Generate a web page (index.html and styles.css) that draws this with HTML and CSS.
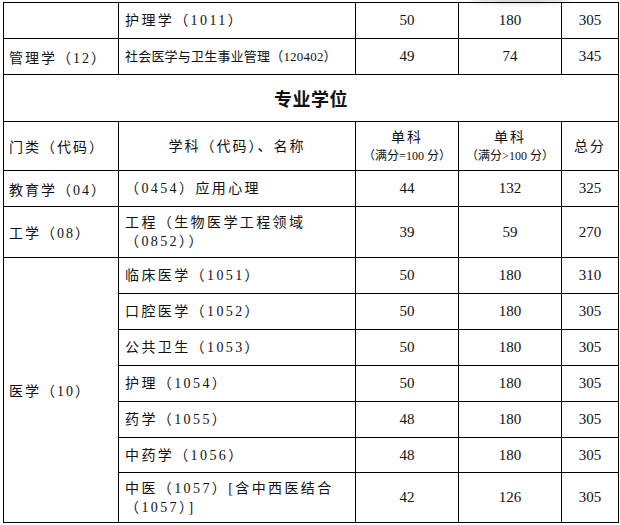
FILE: index.html
```html
<!DOCTYPE html>
<html lang="zh-CN">
<head>
<meta charset="utf-8">
<title>专业学位</title>
<link rel="stylesheet" href="styles.css">
</head>
<body>
<div class="page">
  <div class="shade"></div>
  <table class="score">
    <colgroup>
      <col class="c1"><col class="c2"><col class="c3"><col class="c4"><col class="c5">
    </colgroup>
    <tbody>
      <tr class="r36">
        <td class="cat"></td>
        <td class="subj">护理学（1011）</td>
        <td class="num">50</td>
        <td class="num">180</td>
        <td class="num">305</td>
      </tr>
      <tr class="r36">
        <td class="cat">管理学（12）</td>
        <td class="subj small">社会医学与卫生事业管理（120402）</td>
        <td class="num">49</td>
        <td class="num">74</td>
        <td class="num">345</td>
      </tr>
      <tr class="rtitle">
        <td class="title" colspan="5">专业学位</td>
      </tr>
      <tr class="rhead">
        <td class="cat">门类（代码）</td>
        <td class="hcenter">学科（代码）、名称</td>
        <td class="hcenter"><div>单科</div><div class="sub">（满分=100 分）</div></td>
        <td class="hcenter"><div>单科</div><div class="sub">（满分&gt;100 分）</div></td>
        <td class="hcenter">总分</td>
      </tr>
      <tr class="r36">
        <td class="cat">教育学（04）</td>
        <td class="subj">（0454）应用心理</td>
        <td class="num">44</td>
        <td class="num">132</td>
        <td class="num">325</td>
      </tr>
      <tr class="r51">
        <td class="cat">工学（08）</td>
        <td class="subj">工程（生物医学工程领域<br>（0852））</td>
        <td class="num">39</td>
        <td class="num">59</td>
        <td class="num">270</td>
      </tr>
      <tr class="r36">
        <td class="cat" rowspan="7">医学（10）</td>
        <td class="subj">临床医学（1051）</td>
        <td class="num">50</td>
        <td class="num">180</td>
        <td class="num">310</td>
      </tr>
      <tr class="r36">
        <td class="subj">口腔医学（1052）</td>
        <td class="num">50</td>
        <td class="num">180</td>
        <td class="num">305</td>
      </tr>
      <tr class="r36">
        <td class="subj">公共卫生（1053）</td>
        <td class="num">50</td>
        <td class="num">180</td>
        <td class="num">305</td>
      </tr>
      <tr class="r36">
        <td class="subj">护理（1054）</td>
        <td class="num">50</td>
        <td class="num">180</td>
        <td class="num">305</td>
      </tr>
      <tr class="r36">
        <td class="subj">药学（1055）</td>
        <td class="num">48</td>
        <td class="num">180</td>
        <td class="num">305</td>
      </tr>
      <tr class="r35">
        <td class="subj">中药学（1056）</td>
        <td class="num">48</td>
        <td class="num">180</td>
        <td class="num">305</td>
      </tr>
      <tr class="r50">
        <td class="subj">中医（1057）[含中西医结合<br>（1057）]</td>
        <td class="num">42</td>
        <td class="num">126</td>
        <td class="num">305</td>
      </tr>
    </tbody>
  </table>
</div>
</body>
</html>
```
FILE: styles.css
```css
html, body {
  margin: 0;
  padding: 0;
  background: #ffffff;
}

.page {
  position: relative;
  width: 620px;
  height: 525px;
  padding: 2px 0 0 3px;
  box-sizing: border-box;
  font-family: "Liberation Serif", "Noto Sans CJK SC", serif;
  color: #111111;
}

.shade {
  position: absolute;
  top: -6px;
  left: 470px;
  width: 100px;
  height: 6px;
  border-radius: 50%;
  box-shadow: 0 2px 6px rgba(0, 0, 0, 0.25);
}

.score {
  border-collapse: collapse;
  table-layout: fixed;
  width: 615px;
}

.c1 { width: 115px; }
.c2 { width: 237px; }
.c3 { width: 103px; }
.c4 { width: 103px; }
.c5 { width: 57px; }

.score td {
  border: 1px solid #000000;
  padding: 0;
  vertical-align: middle;
}

.r36 { height: 36px; }
.r35 { height: 35px; }
.r51 { height: 51px; }
.r50 { height: 50px; }
.rtitle { height: 47px; }
.rhead { height: 49px; }

.cat {
  padding-left: 5px !important;
  font-size: 14px;
  letter-spacing: 2px;
  white-space: nowrap;
}

.subj {
  padding-left: 6px !important;
  font-size: 14px;
  letter-spacing: 2.4px;
  line-height: 19px;
}

.subj.small {
  font-size: 13px;
  letter-spacing: 0.2px;
}

.num {
  text-align: center;
  font-size: 15px;
}

.title {
  text-align: center;
  font-family: "Noto Sans CJK SC", sans-serif;
  font-weight: 700;
  font-size: 18px;
  letter-spacing: 0.5px;
}

.hcenter {
  text-align: center;
  font-size: 14px;
  letter-spacing: 2px;
  line-height: 19px;
}

.hcenter .sub {
  font-size: 12px;
  letter-spacing: 0;
  line-height: 18px;
}
```
